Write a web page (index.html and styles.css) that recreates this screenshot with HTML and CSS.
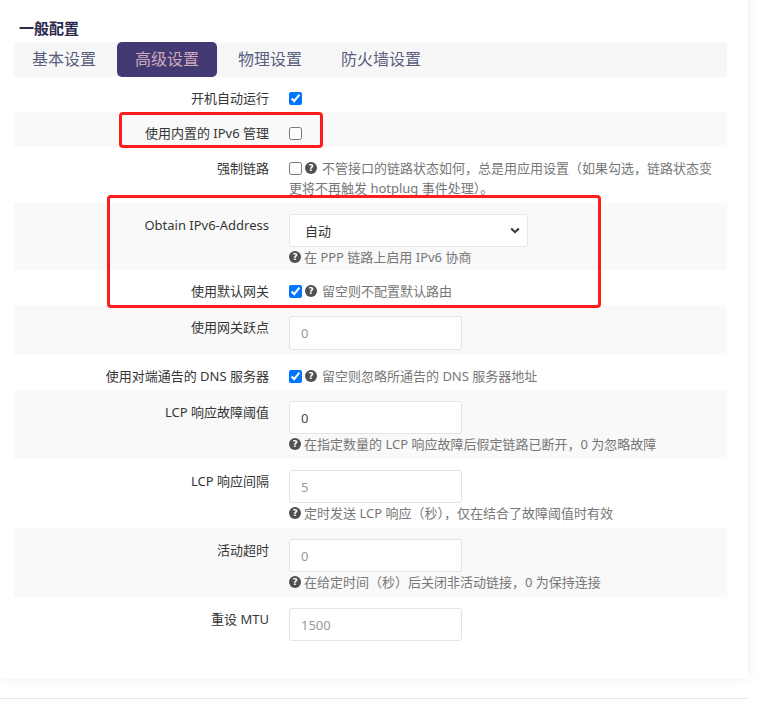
FILE: index.html
```html
<!DOCTYPE html>
<html lang="zh-CN">
<head>
    <meta charset="UTF-8">
    <meta name="viewport" content="width=device-width, initial-scale=1.0">
    <title>一般配置</title>
    <link rel="stylesheet" href="styles.css">
</head>
<body>
    <div class="card">
        <h3 class="section-title">一般配置</h3>
        <ul class="tabs">
            <li>基本设置</li>
            <li class="active">高级设置</li>
            <li>物理设置</li>
            <li>防火墙设置</li>
        </ul>

        <div class="form">
            <div class="row row-check">
                <label class="label">开机自动运行</label>
                <div class="field"><input type="checkbox" checked></div>
            </div>
            <div class="row row-check">
                <label class="label">使用内置的 IPv6 管理</label>
                <div class="field"><input type="checkbox"></div>
            </div>
            <div class="row">
                <label class="label">强制链路</label>
                <div class="field"><input type="checkbox"><span class="help-icon">?</span><span class="help-inline">不管接口的链路状态如何，总是用应用设置（如果勾选，链路状态变更将不再触发 hotplug 事件处理）。</span></div>
            </div>
            <div class="row row-input row-select">
                <label class="label">Obtain IPv6-Address</label>
                <div class="field">
                    <div class="select">
                        <select>
                            <option>自动</option>
                        </select>
                        <svg class="chevron" width="10" height="7" viewBox="0 0 10 7"><path d="M1.2 1.5 L5 5.2 L8.8 1.5" fill="none" stroke="#333" stroke-width="2"/></svg>
                    </div>
                    <div class="help"><span class="help-icon">?</span>在 PPP 链路上启用 IPv6 协商</div>
                </div>
            </div>
            <div class="row row-check">
                <label class="label">使用默认网关</label>
                <div class="field"><input type="checkbox" checked><span class="help-icon">?</span><span class="help-inline">留空则不配置默认路由</span></div>
            </div>
            <div class="row row-input">
                <label class="label">使用网关跃点</label>
                <div class="field"><input type="text" class="text text-tall" placeholder="0"></div>
            </div>
            <div class="row row-check">
                <label class="label">使用对端通告的 DNS 服务器</label>
                <div class="field"><input type="checkbox" checked><span class="help-icon">?</span><span class="help-inline">留空则忽略所通告的 DNS 服务器地址</span></div>
            </div>
            <div class="row row-input">
                <label class="label">LCP 响应故障阈值</label>
                <div class="field">
                    <input type="text" class="text" value="0">
                    <div class="help"><span class="help-icon">?</span>在指定数量的 LCP 响应故障后假定链路已断开，0 为忽略故障</div>
                </div>
            </div>
            <div class="row row-input">
                <label class="label">LCP 响应间隔</label>
                <div class="field">
                    <input type="text" class="text" placeholder="5">
                    <div class="help"><span class="help-icon">?</span>定时发送 LCP 响应（秒），仅在结合了故障阈值时有效</div>
                </div>
            </div>
            <div class="row row-input">
                <label class="label">活动超时</label>
                <div class="field">
                    <input type="text" class="text" placeholder="0">
                    <div class="help"><span class="help-icon">?</span>在给定时间（秒）后关闭非活动链接，0 为保持连接</div>
                </div>
            </div>
            <div class="row row-input">
                <label class="label">重设 MTU</label>
                <div class="field"><input type="text" class="text" placeholder="1500"></div>
            </div>

            <!-- 标注框 -->
            <div class="mark mark-ipv6"></div>
            <div class="mark mark-addr"></div>
        </div>
    </div>
    <div class="footer-line"></div>
</body>
</html>
```

FILE: styles.css
```css
body {
    margin: 0;
    background: #fff;
    font-family: "Noto Sans", "Noto Sans CJK SC", sans-serif;
    font-size: 13px;
    color: #333;
}

.card {
    width: 713px;
    margin-top: -20px;
    padding: 20px 21px 33px 14px;
    background: #fff;
    box-shadow: 0 0 10px rgba(0, 0, 0, 0.07);
}

.section-title {
    margin: 0;
    padding-top: 18px;
    margin-bottom: 4px;
    line-height: 20px;
    font-size: 15px;
    font-weight: bold;
    color: #2b2a4c;
    padding-left: 5px;
}

/* 选项卡 */
.tabs {
    display: flex;
    margin: 0;
    padding: 0;
    list-style: none;
    background: #f7f7f8;
}

.tabs li {
    padding: 0 18px;
    margin-right: 3px;
    line-height: 35px;
    font-size: 16px;
    color: #5a5e7f;
    border-radius: 5px;
}

.tabs li.active {
    background: #433a73;
    color: #cdaabb;
}

/* 表单行 */
.form {
    position: relative;
}

.row {
    display: flex;
    padding: 11px 0 5px;
}

.row-check {
    padding-bottom: 4px;
}

.row-select {
    padding-bottom: 3px;
}

.row:nth-child(even) {
    background: #f9f9f9;
}

.label {
    width: 255px;
    flex-shrink: 0;
    text-align: right;
    line-height: 20px;
    color: #363636;
}

.row-input .label {
    padding-top: 1px;
}

.field {
    flex: 1;
    margin-left: 20px;
    padding-right: 10px;
    line-height: 20px;
}

.field input[type=checkbox] {
    width: 13px;
    height: 13px;
    margin: 4px 3px 0 0;
    vertical-align: top;
}

.help-icon {
    display: inline-block;
    width: 12px;
    height: 12px;
    margin: 4px 5px 0 0;
    border-radius: 50%;
    background: #505050;
    color: #fff;
    font-family: "DejaVu Sans", sans-serif;
    font-size: 9px;
    font-weight: bold;
    line-height: 12px;
    text-align: center;
    vertical-align: top;
}

.help-inline {
    color: #777;
}

.help {
    color: #777;
    line-height: 20px;
}

.help .help-icon {
    margin-right: 3px;
}

.text {
    display: block;
    box-sizing: border-box;
    width: 173px;
    height: 33px;
    padding: 0 11px;
    border: 1px solid #e3e3e3;
    border-radius: 3px;
    background: #fff;
    font-family: inherit;
    font-size: 13px;
    color: #444;
    outline: none;
}

.text-tall {
    height: 34px;
}

.text::placeholder {
    color: #999;
}

.select {
    position: relative;
    width: 239px;
}

.select select {
    display: block;
    box-sizing: border-box;
    width: 239px;
    height: 33px;
    padding: 0 15px;
    border: 1px solid #e6e6e6;
    border-radius: 3px;
    background: #fff;
    font-family: inherit;
    font-size: 13px;
    color: #333;
    appearance: none;
    -webkit-appearance: none;
    outline: none;
}

.chevron {
    position: absolute;
    right: 8px;
    top: 13px;
}

/* 红色标注框 */
.mark {
    position: absolute;
    box-sizing: border-box;
    border: 3px solid #ff1c1c;
    border-radius: 4px;
    pointer-events: none;
}

.mark-ipv6 {
    left: 105px;
    top: 35px;
    width: 204px;
    height: 36px;
}

.mark-addr {
    left: 93px;
    top: 118px;
    width: 494px;
    height: 113px;
}

.footer-line {
    width: 748px;
    height: 1px;
    margin-top: 19px;
    background: #e8e8e8;
}
```
